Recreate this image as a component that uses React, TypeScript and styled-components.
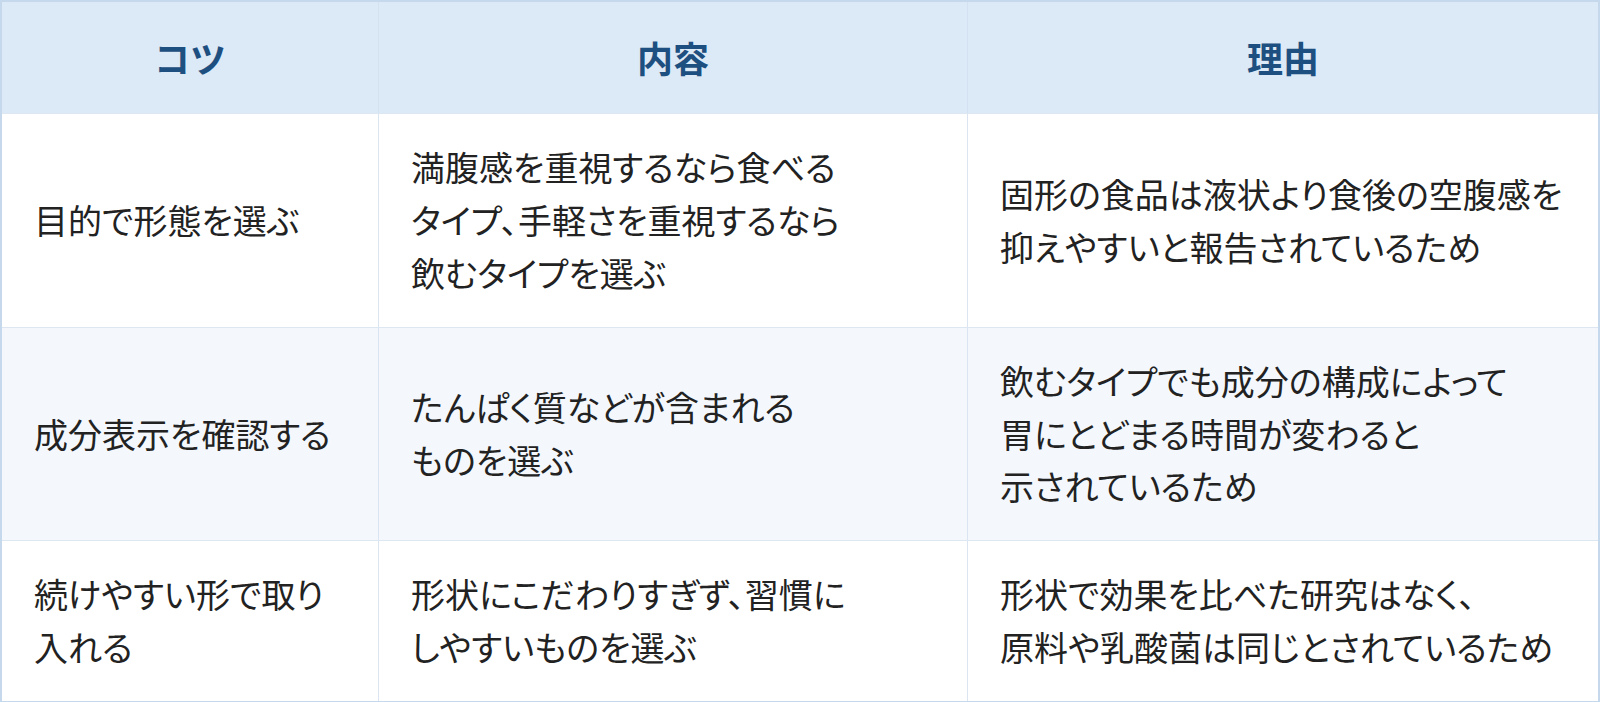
import React from "react";
import styled, { createGlobalStyle } from "styled-components";

const GlobalStyle = createGlobalStyle`
  html, body {
    margin: 0;
    padding: 0;
    background: #ffffff;
  }
  body {
    font-family: "Noto Sans CJK JP", "Noto Sans", sans-serif;
  }
  * {
    box-sizing: border-box;
  }
`;

const Table = styled.div`
  width: 1600px;
  border: 2px solid #c6d8ec;
  background: #ffffff;
  font-family: "Noto Sans CJK JP", "Noto Sans", sans-serif;
`;

const Row = styled.div<{ $variant: "head" | "plain" | "alt" }>`
  display: grid;
  grid-template-columns: 376px 589px 1fr;
  background: ${(p) =>
    p.$variant === "head" ? "#dce9f6" : p.$variant === "alt" ? "#f4f8fd" : "#ffffff"};
  border-top: ${(p) => (p.$variant === "head" ? "none" : "1px solid #dde7f2")};
`;

const HeadCell = styled.div<{ $first?: boolean }>`
  display: flex;
  align-items: center;
  justify-content: center;
  padding: 26px 32px;
  border-left: ${(p) => (p.$first ? "none" : "1px solid #d3e1f0")};
  color: #1d4f80;
  font-size: 36px;
  font-weight: 700;
  line-height: 1.65;
`;

const Cell = styled.div<{ $first?: boolean }>`
  display: flex;
  align-items: center;
  padding: 27px 32px;
  border-left: ${(p) => (p.$first ? "none" : "1px solid #dae5f1")};
  color: #222222;
  font-size: 34px;
  font-weight: 400;
  line-height: 52.8px;
  font-feature-settings: "palt";
`;

const CellText = styled.div`
  white-space: nowrap;
`;

const headers = ["コツ", "内容", "理由"];

const rows: string[][][] = [
  [
    ["目的で形態を選ぶ"],
    ["満腹感を重視するなら食べる", "タイプ、手軽さを重視するなら", "飲むタイプを選ぶ"],
    ["固形の食品は液状より食後の空腹感を", "抑えやすいと報告されているため"],
  ],
  [
    ["成分表示を確認する"],
    ["たんぱく質などが含まれる", "ものを選ぶ"],
    ["飲むタイプでも成分の構成によって", "胃にとどまる時間が変わると", "示されているため"],
  ],
  [
    ["続けやすい形で取り", "入れる"],
    ["形状にこだわりすぎず、習慣に", "しやすいものを選ぶ"],
    ["形状で効果を比べた研究はなく、", "原料や乳酸菌は同じとされているため"],
  ],
];

export default function App() {
  return (
    <>
      <GlobalStyle />
      <Table>
        <Row $variant="head">
          {headers.map((h, i) => (
            <HeadCell key={h} $first={i === 0}>
              {h}
            </HeadCell>
          ))}
        </Row>
        {rows.map((row, ri) => (
          <Row key={ri} $variant={ri % 2 === 1 ? "alt" : "plain"}>
            {row.map((lines, ci) => (
              <Cell key={ci} $first={ci === 0}>
                <CellText>
                  {lines.map((line, li) => (
                    <React.Fragment key={li}>
                      {li > 0 && <br />}
                      {line}
                    </React.Fragment>
                  ))}
                </CellText>
              </Cell>
            ))}
          </Row>
        ))}
      </Table>
    </>
  );
}
